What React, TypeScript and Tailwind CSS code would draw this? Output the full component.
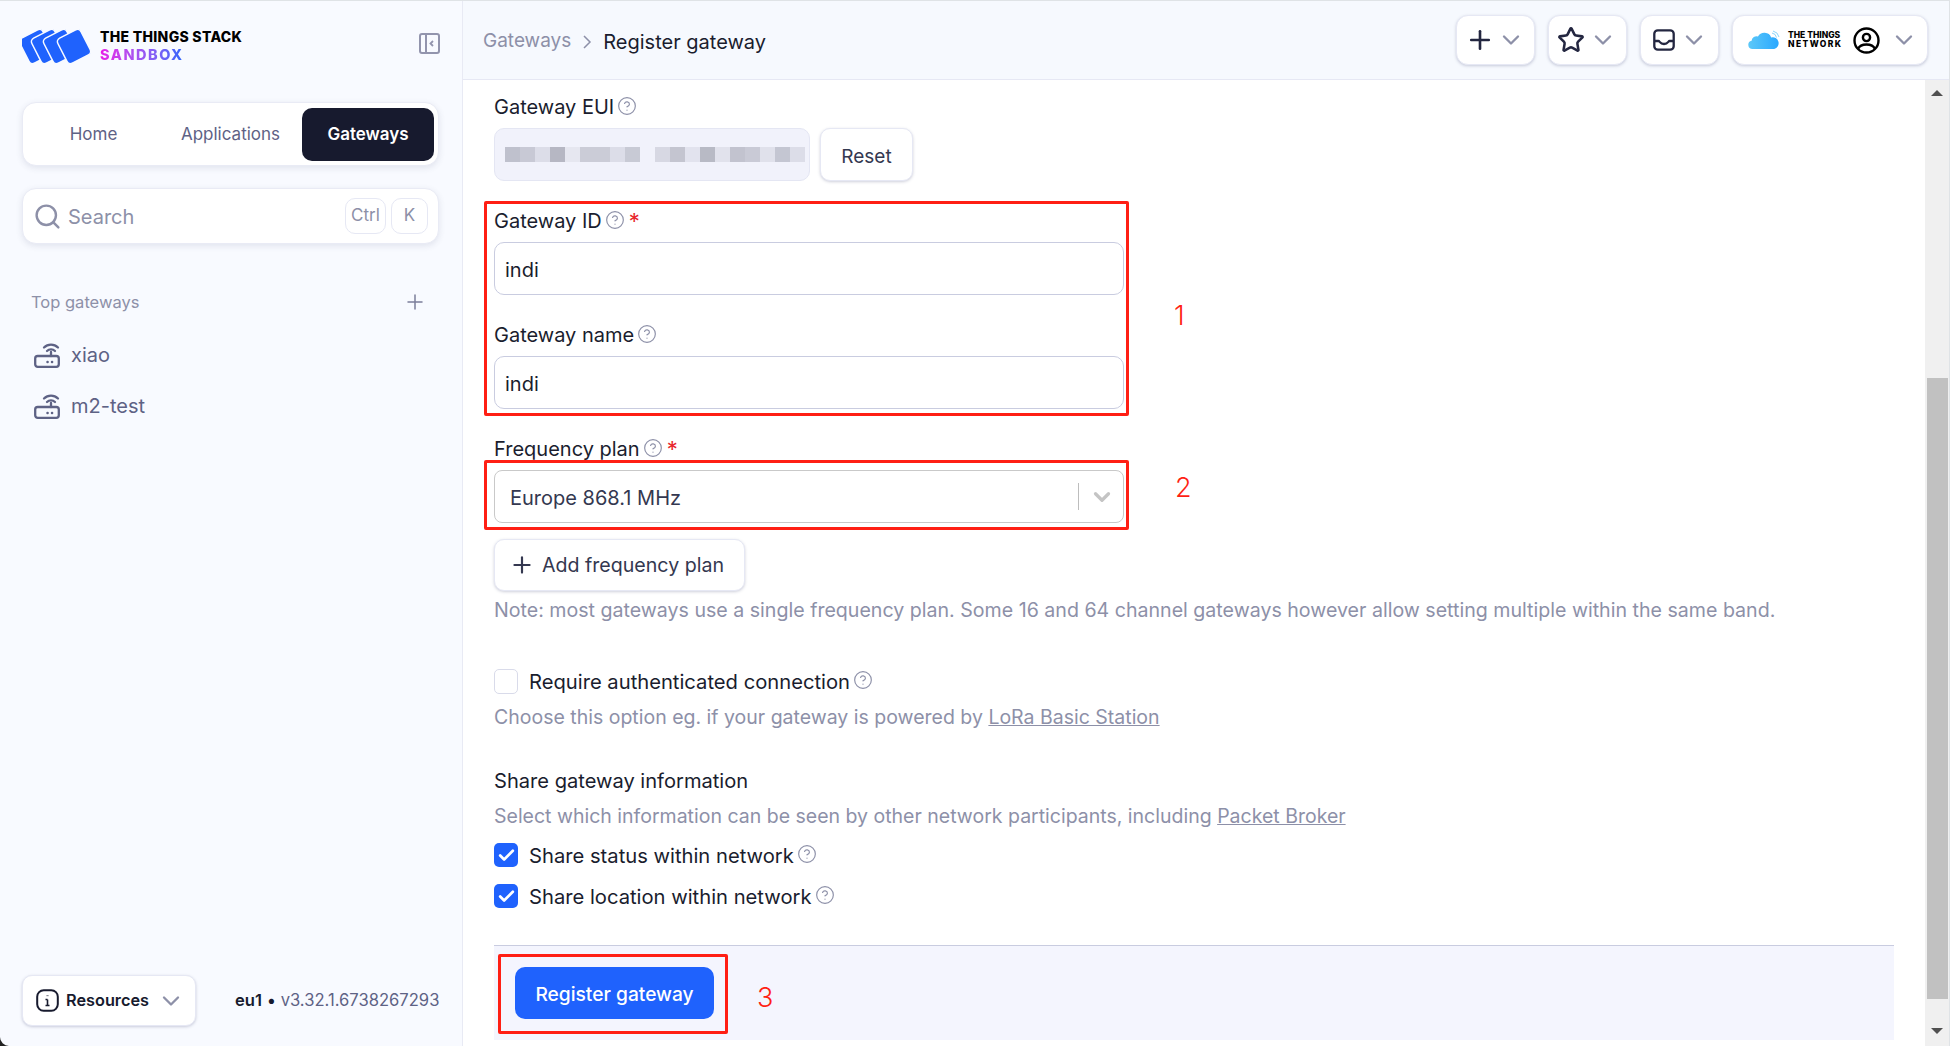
import React from 'react';
import { ChevronDown, CircleHelp, Plus, Search, Star, Check } from 'lucide-react';

const euiCells = [
  '#bfc1cd', '#c8c9d5', '#dcdde8', '#b6b7c3', '#e6e7f0', '#cbccd7', '#cbccd7', '#dcdde8', '#c8cad5', 'transparent',
  '#d7d8e3', '#c4c5d0', '#e2e3ee', '#b8bac5', '#e1e2ec', '#c2c3cf', '#c9cad6', '#e0e1eb', '#c4c6d2', '#dcdde8',
];

const Help = () => <CircleHelp className="ml-[3px] -mt-[2px] h-[20px] w-[20px] text-[#8d90a8]" strokeWidth={1.4} />;

const Label = ({ text, required }: { text: string; required?: boolean }) => (
  <div className="flex h-[28px] items-center pt-[2px] text-[20px] text-[#1a1d2e]">
    {text}
    <Help />
    {required && <span className="ml-[4px] text-[22px] text-[#e8262b]">*</span>}
  </div>
);

const Field = ({ label, required, value }: { label: string; required?: boolean; value: string }) => (
  <div>
    <Label text={label} required={required} />
    <div className="mt-[8px] flex h-[53px] w-[630px] items-center rounded-[10px] border border-[#c9cce0] bg-white px-[10px] pt-[2px] text-[20px] text-[#1a1d2e]">
      {value}
    </div>
  </div>
);

const GatewayIcon = () => (
  <svg width="26" height="25" viewBox="0 0 26 25" fill="none" stroke="#5e6285" strokeWidth="2.3" strokeLinecap="round">
    <rect x="1.2" y="13" width="23.6" height="10.8" rx="2.5" />
    <path d="M17 13V9" />
    <path d="M13 8a5.6 5.6 0 0 1 8 0" />
    <path d="M10 4.5a10 10 0 0 1 14 0" />
    <path d="M13.5 19h.1M18 19h.1" strokeWidth="2.5" />
  </svg>
);

const HeaderButton = ({ children }: { children: React.ReactNode }) => (
  <div className="flex h-[50px] items-center rounded-[12px] border border-[#e6e8f4] bg-white shadow-[0_1px_3px_rgba(60,65,110,0.25)]">
    {children}
  </div>
);

const CheckRow = ({ text, checked }: { text: string; checked?: boolean }) => (
  <div className="flex h-[28px] items-center text-[20.2px] text-[#1a1d2e]">
    {checked ? (
      <span className="flex h-[24px] w-[24px] items-center justify-center rounded-[5px] bg-[#1f62fd]">
        <Check className="h-[19px] w-[19px] text-white" strokeWidth={3.4} />
      </span>
    ) : (
      <span className="h-[25px] w-[24px] rounded-[5px] border border-[#d9dbea] bg-white" />
    )}
    <span className="ml-[11px] pt-[2px]">{text}</span>
    <Help />
  </div>
);

const App: React.FC = () => {
  return (
    <div className="relative flex h-[1046px] w-[1950px] overflow-hidden border-t border-r border-[#dfe3e6] bg-white font-[Inter,sans-serif]">
      <aside className="flex h-full w-[463px] shrink-0 flex-col border-r border-[#e8eaf4] bg-[#f8faff] px-[22px]">
        <div className="flex h-[101px] shrink-0 items-start justify-between pt-[27px]">
          <div className="flex items-center">
            <svg width="70" height="35" viewBox="0 0 70 35">
              {[14, 26, 38, 52].map((cx) => (
                <rect
                  key={cx}
                  x={cx - 13}
                  y="3.5"
                  width="26"
                  height="28"
                  rx="4"
                  fill="#1f62fd"
                  stroke="#f8faff"
                  strokeWidth="1.5"
                  transform={`rotate(-27 ${cx} 17.5)`}
                />
              ))}
            </svg>
            <div className="ml-[8px] text-[14px] leading-[18px] font-extrabold">
              <div className="tracking-[0.3px] text-black">THE THINGS STACK</div>
              <div className="w-fit bg-gradient-to-r from-[#e816e8] to-[#2566fb] bg-clip-text text-[14.5px] tracking-[1.5px] text-transparent">SANDBOX</div>
            </div>
          </div>
          <svg className="mt-[5px]" width="21" height="21" viewBox="0 0 21 21" fill="none" stroke="#9294ad" strokeWidth="2">
            <rect x="1" y="1" width="19" height="19" rx="2" />
            <path d="M7 1v19" />
            <path d="M14 8l-2.5 2.5L14 13" strokeWidth="1.8" />
          </svg>
        </div>

        <div className="flex h-[64px] w-[417px] shrink-0 items-center rounded-[14px] border border-[#e9ebf5] bg-white pr-[4px] pl-[5px] text-[17px] text-[#5e6285] shadow-[0_2px_6px_rgba(60,65,110,0.12)]">
          <div className="w-[131px] pt-[2px] text-center">Home</div>
          <div className="w-[143px] pt-[2px] text-center">Applications</div>
          <div className="flex h-[53px] w-[132px] items-center justify-center rounded-[10px] bg-[#171a2e] pt-[2px] font-semibold text-white">Gateways</div>
        </div>

        <div className="mt-[22px] flex h-[56px] w-[417px] shrink-0 items-center rounded-[14px] border border-[#e9ebf5] bg-white pr-[10px] pl-[10px] shadow-[0_2px_6px_rgba(60,65,110,0.12)]">
          <Search className="h-[29px] w-[29px] text-[#8d90a8]" strokeWidth={2} />
          <span className="ml-[6px] flex-1 pt-[2px] text-[20px] text-[#8d90a8]">Search</span>
          <span className="flex h-[36px] w-[41px] items-center justify-center rounded-[10px] border border-[#e6e8f4] text-[17px] text-[#8d90a8]">Ctrl</span>
          <span className="ml-[5px] flex h-[36px] w-[37px] items-center justify-center rounded-[10px] border border-[#e6e8f4] text-[17px] text-[#8d90a8]">K</span>
        </div>

        <div className="mt-[45px] flex h-[26px] shrink-0 items-center justify-between pr-[13px] pl-[9px]">
          <span className="text-[16.5px] text-[#8d90a8]">Top gateways</span>
          <Plus className="h-[24px] w-[24px] text-[#7b7e9a]" strokeWidth={1.5} />
        </div>
        <div className="mt-[26px] flex h-[28px] shrink-0 items-center pl-[12px] text-[20px] text-[#5e6285]">
          <GatewayIcon />
          <span className="ml-[11px]">xiao</span>
        </div>
        <div className="mt-[23px] flex h-[28px] shrink-0 items-center pl-[12px] text-[20px] text-[#5e6285]">
          <GatewayIcon />
          <span className="ml-[11px]">m2-test</span>
        </div>

        <div className="mt-auto mb-[20px] flex items-center">
          <div className="flex h-[51px] w-[174px] shrink-0 items-center rounded-[10px] border border-[#e6e8f4] bg-white pl-[13px] shadow-[0_1px_3px_rgba(60,65,110,0.25)]">
            <svg className="shrink-0" width="23" height="23" viewBox="0 0 23 23" fill="none" stroke="#171a2e" strokeWidth="2">
              <rect x="1.2" y="1.2" width="20.6" height="20.6" rx="6.5" />
              <path d="M11.5 10.5v6M9.5 10.5h2M9.5 16.5h4" strokeWidth="1.6" />
              <path d="M11.5 6.5v.6" strokeWidth="2.2" />
            </svg>
            <span className="ml-[7px] text-[16.3px] font-semibold text-[#171a2e]">Resources</span>
            <ChevronDown className="ml-[8px] h-[28px] w-[28px] shrink-0 text-[#8d90a8]" strokeWidth={2} />
          </div>
          <div className="ml-[39px] text-[16.6px] whitespace-nowrap text-[#5e6285]">
            <span className="font-semibold text-[#171a2e]">eu1</span>
            <span className="text-[#171a2e]"> • </span>v3.32.1.6738267293
          </div>
        </div>
      </aside>

      <main className="flex h-full min-w-0 flex-1 flex-col">
        <header className="flex h-[79px] shrink-0 items-center border-b border-[#e6e8f4] bg-[#f6f9fe] pr-[21px] pl-[20px]">
          <div className="flex items-center pt-[3px]">
            <span className="text-[19px] text-[#8d90a8]">Gateways</span>
            <svg className="mx-[11px]" width="10" height="16" viewBox="0 0 10 16" fill="none" stroke="#8d90a8" strokeWidth="1.5">
              <path d="M2 2l6 6-6 6" />
            </svg>
            <span className="text-[20px] text-[#1a1d2e]">Register gateway</span>
          </div>
          <div className="ml-auto flex gap-[13px]">
            <HeaderButton>
              <div className="flex w-[77px] items-center justify-between pr-[9px] pl-[8px]">
                <Plus className="h-[30px] w-[30px] text-[#232640]" strokeWidth={2.1} />
                <ChevronDown className="h-[28px] w-[28px] text-[#8d90a8]" strokeWidth={2} />
              </div>
            </HeaderButton>
            <HeaderButton>
              <div className="flex w-[77px] items-center justify-between pr-[9px] pl-[8px]">
                <Star className="h-[28px] w-[28px] text-[#232640]" strokeWidth={2.2} />
                <ChevronDown className="h-[28px] w-[28px] text-[#8d90a8]" strokeWidth={2} />
              </div>
            </HeaderButton>
            <HeaderButton>
              <div className="flex w-[77px] items-center justify-between pr-[10px] pl-[12px]">
                <svg width="22" height="22" viewBox="0 0 22 22" fill="none" stroke="#232640" strokeWidth="2.3">
                  <rect x="1.3" y="1.3" width="19.4" height="19.4" rx="3.5" />
                  <path d="M1.3 12h4.2c1.2 0 1.5 3 5.500 3s4.300-3 5.500-3h4.200" />
                </svg>
                <ChevronDown className="h-[28px] w-[28px] text-[#8d90a8]" strokeWidth={2} />
              </div>
            </HeaderButton>
            <HeaderButton>
              <div className="flex w-[194px] items-center pr-[9px] pl-[15px]">
                <svg width="34" height="20" viewBox="0 0 34 20">
                  <defs>
                    <linearGradient id="ttn" x1="0" y1="0" x2="1" y2="0">
                      <stop offset="0" stopColor="#5cc8f8" />
                      <stop offset="1" stopColor="#2aa8ff" />
                    </linearGradient>
                  </defs>
                  <path d="M4.5 19a4.2 4.2 0 0 1-.9-8.3 5 5 0 0 1 6.4-4.2 7.3 7.3 0 0 1 13.2 1 5 5 0 0 1 3 11.5z" fill="url(#ttn)" />
                  <path d="M24 3a5.500 5.500 0 0 1 4.500 4.500M25 1a8 8 0 0 1 6 6" fill="none" stroke="#7fd0f8" strokeWidth="0.9" />
                </svg>
                <div className="ml-[6px] text-[8.5px] leading-[9px] font-extrabold text-black">
                  <div>THE THINGS</div>
                  <div className="tracking-[1.4px]">NETWORK</div>
                </div>
                <svg className="ml-[11px]" width="27" height="27" viewBox="0 0 27 27" fill="none" stroke="#000" strokeWidth="2.4">
                  <circle cx="13.5" cy="13.5" r="12" />
                  <circle cx="13.5" cy="10.5" r="3.6" />
                  <path d="M5 22c1.500-3.500 4.500-4.500 8.500-4.500s7 1 8.500 4.500" />
                </svg>
                <ChevronDown className="ml-auto h-[28px] w-[28px] text-[#8d90a8]" strokeWidth={2} />
              </div>
            </HeaderButton>
          </div>
        </header>

        <div className="flex min-h-0 flex-1">
          <div className="min-w-0 flex-1 px-[31px] pt-[12px]">
            <Label text="Gateway EUI" />
            <div className="mt-[8px] flex">
              <div className="flex h-[53px] w-[316px] items-center rounded-[10px] border border-[#e4e6f3] bg-[#f1f2fb] pl-[10px]">
                {euiCells.map((color, i) => (
                  <span key={i} className="h-[15px] w-[15px]" style={{ backgroundColor: color }} />
                ))}
              </div>
              <div className="ml-[10px] flex h-[53px] w-[93px] items-center justify-center rounded-[10px] border border-[#e6e8f4] bg-white pt-[6px] text-[19px] text-[#343850] shadow-[0_1px_3px_rgba(60,65,110,0.25)]">
                Reset
              </div>
            </div>

            <div className="mt-[25px]">
              <Field label="Gateway ID" required value="indi" />
            </div>
            <div className="mt-[25px]">
              <Field label="Gateway name" value="indi" />
            </div>

            <div className="mt-[25px]">
              <Label text="Frequency plan" required />
              <div className="mt-[8px] flex h-[53px] w-[630px] items-center rounded-[8px] border border-[#c9c9c9] bg-white pl-[15px] text-[20px] text-[#343850]">
                <span className="flex-1 pt-[2px]">Europe 868.1 MHz</span>
                <span className="h-[27px] w-px bg-[#bdbdbd]" />
                <ChevronDown className="mr-[8px] ml-[10px] h-[26px] w-[26px] text-[#c4c4c4]" strokeWidth={3} />
              </div>
            </div>

            <div className="mt-[16px] flex h-[52px] w-[251px] items-center rounded-[10px] border border-[#e6e8f4] bg-white pl-[14px] text-[19.6px] text-[#343850] shadow-[0_1px_3px_rgba(60,65,110,0.25)]">
              <Plus className="mr-[7px] h-[26px] w-[26px]" strokeWidth={2} />
              <span className="pt-[2px]">Add frequency plan</span>
            </div>
            <div className="mt-[5px] flex h-[28px] items-center pt-[2px] text-[19.6px] whitespace-nowrap text-[#8d90a8]">
              Note: most gateways use a single frequency plan. Some 16 and 64 channel gateways however allow setting multiple within the same band.
            </div>

            <div className="mt-[43px]">
              <CheckRow text="Require authenticated connection" />
            </div>
            <div className="mt-[7px] flex h-[28px] items-center pt-[4px] text-[19.5px] whitespace-pre text-[#8d90a8]">
              Choose this option eg. if your gateway is powered by <span className="underline">LoRa Basic Station</span>
            </div>

            <div className="mt-[36px] flex h-[28px] items-center pt-[2px] text-[20.1px] text-[#1a1d2e]">Share gateway information</div>
            <div className="mt-[7px] flex h-[28px] items-center pt-[4px] text-[19.5px] whitespace-pre text-[#8d90a8]">
              Select which information can be seen by other network participants, including <span className="underline">Packet Broker</span>
            </div>
            <div className="mt-[12px]">
              <CheckRow text="Share status within network" checked />
            </div>
            <div className="mt-[13px]">
              <CheckRow text="Share location within network" checked />
            </div>

            <div className="mt-[35px] flex h-[95px] items-start border-t border-[#c9cce0] bg-[#f4f5fe] pt-[21px] pl-[21px]">
              <div className="flex h-[52px] w-[199px] items-center justify-center rounded-[10px] bg-[#1f62fd] pt-[2px] text-[19.2px] font-medium text-white">
                Register gateway
              </div>
            </div>
          </div>

          <div className="flex w-[24px] shrink-0 flex-col items-center bg-[#f0f0f0]">
            <div className="mt-[10px] h-0 w-0 border-x-[6px] border-b-[6px] border-x-transparent border-b-[#505050]" />
            <div className="mt-[282px] h-[621px] w-[21px] bg-[#c1c1c1]" />
            <div className="mt-[29px] h-0 w-0 border-x-[6px] border-t-[6px] border-x-transparent border-t-[#505050]" />
          </div>
        </div>
      </main>

      {/* annotations drawn over the screenshot */}
      <div className="absolute top-[200px] left-[484px] h-[215px] w-[645px] rounded-[2px] border-[3px] border-[#ff1f14]" />
      <div className="absolute top-[459px] left-[484px] h-[70px] w-[645px] rounded-[2px] border-[3px] border-[#ff1f14]" />
      <div className="absolute top-[953px] left-[498px] h-[80px] w-[230px] rounded-[2px] border-[3px] border-[#ff1f14]" />
      <span className="absolute top-[295px] left-[1174px] text-[27px] font-light text-[#ff1f14]">1</span>
      <span className="absolute top-[467px] left-[1175px] text-[27px] font-light text-[#ff1f14]">2</span>
      <span className="absolute top-[977px] left-[757px] text-[27px] font-light text-[#ff1f14]">3</span>
      {/* rounded window corner at the bottom left */}
      <svg className="absolute bottom-0 left-0" width="9" height="9" viewBox="0 0 9 9">
        <path d="M0 0a9 9 0 0 0 9 9H0z" fill="#222" />
      </svg>
    </div>
  );
};

export default App;
